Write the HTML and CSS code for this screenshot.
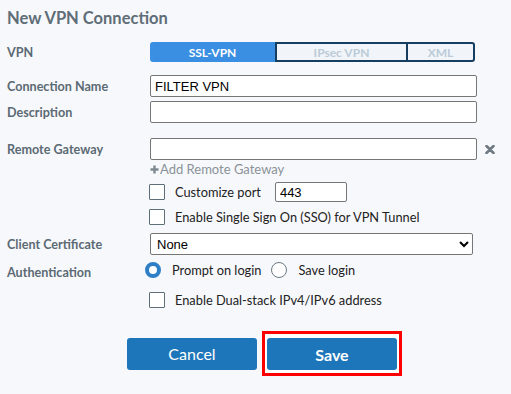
FILE: index.html
```html
<!DOCTYPE html>
<html lang="en">
<head>
    <meta charset="UTF-8">
    <meta name="viewport" content="width=device-width, initial-scale=1.0">
    <title>New VPN Connection</title>
    <link rel="stylesheet" href="styles.css">
</head>
<body>
    <h1>New VPN Connection</h1>

    <div class="row row-vpn">
        <label>VPN</label>
        <div class="seg">
            <span class="seg-item active">SSL-VPN</span>
            <span class="seg-item ipsec">IPsec VPN</span>
            <span class="seg-item xml">XML</span>
        </div>
    </div>

    <div class="row row-name">
        <label>Connection Name</label>
        <input type="text" class="field" value="FILTER VPN">
    </div>

    <div class="row row-desc">
        <label>Description</label>
        <input type="text" class="field" value="">
    </div>

    <div class="row row-gateway">
        <label>Remote Gateway</label>
        <input type="text" class="field" value="">
        <svg class="remove" width="10" height="9" viewBox="0 0 10 9">
            <path d="M1.5 1 L8.5 8 M8.5 1 L1.5 8" stroke="#6f7a82" stroke-width="2.6" stroke-linecap="round"/>
        </svg>
    </div>

    <div class="row row-add">
        <span class="add-link">
            <svg width="9" height="9" viewBox="0 0 9 9">
                <path d="M4.5 0.5 V8.5 M0.5 4.5 H8.5" stroke="#7e8a92" stroke-width="2.4"/>
            </svg>Add Remote Gateway
        </span>
    </div>

    <div class="row row-port">
        <input type="checkbox" class="check">
        <span class="check-text">Customize port</span>
        <input type="text" class="port" value="443">
    </div>

    <div class="row row-sso">
        <input type="checkbox" class="check">
        <span class="check-text">Enable Single Sign On (SSO) for VPN Tunnel</span>
    </div>

    <div class="row row-cert">
        <label>Client Certificate</label>
        <select class="select">
            <option>None</option>
        </select>
    </div>

    <div class="row row-auth">
        <label>Authentication</label>
        <div class="radios">
            <span class="radio checked"></span>
            <span class="radio-text">Prompt on login</span>
            <span class="radio"></span>
            <span class="radio-text">Save login</span>
        </div>
    </div>

    <div class="row row-dual">
        <input type="checkbox" class="check">
        <span class="check-text">Enable Dual-stack IPv4/IPv6 address</span>
    </div>

    <div class="buttons">
        <button class="btn cancel">Cancel</button>
        <div class="highlight">
            <button class="btn save">Save</button>
        </div>
    </div>
</body>
</html>
```

FILE: styles.css
```css
body {
    margin: 0;
    padding: 0 7px;
    background-color: #f7f8fb;
    font-family: Lato, "Liberation Sans", sans-serif;
    font-size: 13px;
    color: #222;
}
h1 {
    margin: 0;
    padding-top: 6px;
    font-size: 16.5px;
    line-height: 24px;
    font-weight: bold;
    color: #5e6d77;
}
.row {
    display: flex;
    align-items: center;
}
.row label {
    width: 143px;
    flex: none;
    font-size: 12.6px;
    font-weight: bold;
    color: #5b6a74;
}
.row-vpn {
    margin-top: 12px;
    height: 20px;
}
.seg {
    display: flex;
    height: 20px;
}
.seg-item {
    box-sizing: border-box;
    height: 20px;
    display: flex;
    align-items: center;
    justify-content: center;
    font-size: 12px;
    font-weight: bold;
    color: #bccbd8;
    background: #f1f5f9;
    border: 2px solid #163e60;
}
.seg-item.active {
    width: 125px;
    background: #3b8fe2;
    color: #fff;
    border: none;
    border-radius: 3px 0 0 3px;
}
.seg-item.ipsec {
    width: 131px;
    border-right: none;
}
.seg-item.xml {
    width: 69px;
    border-radius: 0 3px 3px 0;
}
.field {
    box-sizing: border-box;
    width: 327px;
    height: 22px;
    margin: 0;
    padding: 0 4px;
    border: 1px solid #767676;
    border-radius: 2px;
    background: #fff;
    font-family: "Liberation Sans", Arial, sans-serif;
    font-size: 13px;
    color: #000;
}
.row-name {
    margin-top: 13px;
}
.row-desc {
    margin-top: 4px;
}
.row-gateway {
    margin-top: 15px;
}
.remove {
    margin-left: 8px;
}
.row-add {
    margin-top: 2px;
    padding-left: 143px;
    height: 14px;
}
.add-link {
    display: flex;
    align-items: center;
    color: #8a9298;
    font-size: 13px;
}
.add-link svg {
    margin-right: 1px;
}
.check {
    appearance: none;
    box-sizing: border-box;
    width: 16px;
    height: 16px;
    margin: 0 10px 0 142px;
    border: 1px solid #5f6f7a;
    border-radius: 1px;
    background: #fff;
    flex: none;
}
.check-text {
    color: #222;
    font-size: 12.8px;
}
.row-port {
    margin-top: 6px;
    height: 20px;
}
.port {
    box-sizing: border-box;
    width: 72px;
    height: 20px;
    margin: 0 0 0 14px;
    padding: 0 4px;
    border: 1px solid #767676;
    border-radius: 2px;
    background: #fff;
    font-family: "Liberation Sans", Arial, sans-serif;
    font-size: 13px;
    color: #000;
}
.row-sso {
    margin-top: 5px;
    height: 20px;
}
.row-cert {
    margin-top: 6px;
}
.select {
    box-sizing: border-box;
    width: 323px;
    height: 22px;
    margin: 0;
    padding: 0 2px;
    border: 1px solid #767676;
    border-radius: 2px;
    background: #fff;
    font-family: "Liberation Sans", Arial, sans-serif;
    font-size: 13px;
    color: #000;
}
.row-auth {
    margin-top: 7px;
    height: 16px;
}
.row-auth label {
    padding-top: 5px;
    width: 138px;
}
.radios {
    display: flex;
    align-items: center;
}
.radio {
    box-sizing: border-box;
    width: 16px;
    height: 16px;
    border-radius: 50%;
    border: 1px solid #6b7a85;
    background: #fff;
    flex: none;
}
.radio.checked {
    border: 4px solid #2f7fc6;
}
.radio-text {
    margin-left: 11px;
    margin-right: 10px;
    color: #222;
    font-size: 12.8px;
}
.row-dual {
    margin-top: 12px;
    height: 20px;
}
.buttons {
    display: flex;
    align-items: center;
    margin-top: 21px;
    padding-left: 120px;
}
.btn {
    width: 130px;
    height: 32px;
    border: none;
    border-radius: 3px;
    background-color: #1e76ba;
    color: #fff;
    font-family: Lato, "Liberation Sans", sans-serif;
    font-size: 16px;
    cursor: pointer;
}
.btn.save {
    font-weight: bold;
}
.highlight {
    margin-left: 5px;
    padding: 4px 2px 3px 2px;
    border: 3px solid #ff0000;
    background: #fff;
    display: flex;
}
```
